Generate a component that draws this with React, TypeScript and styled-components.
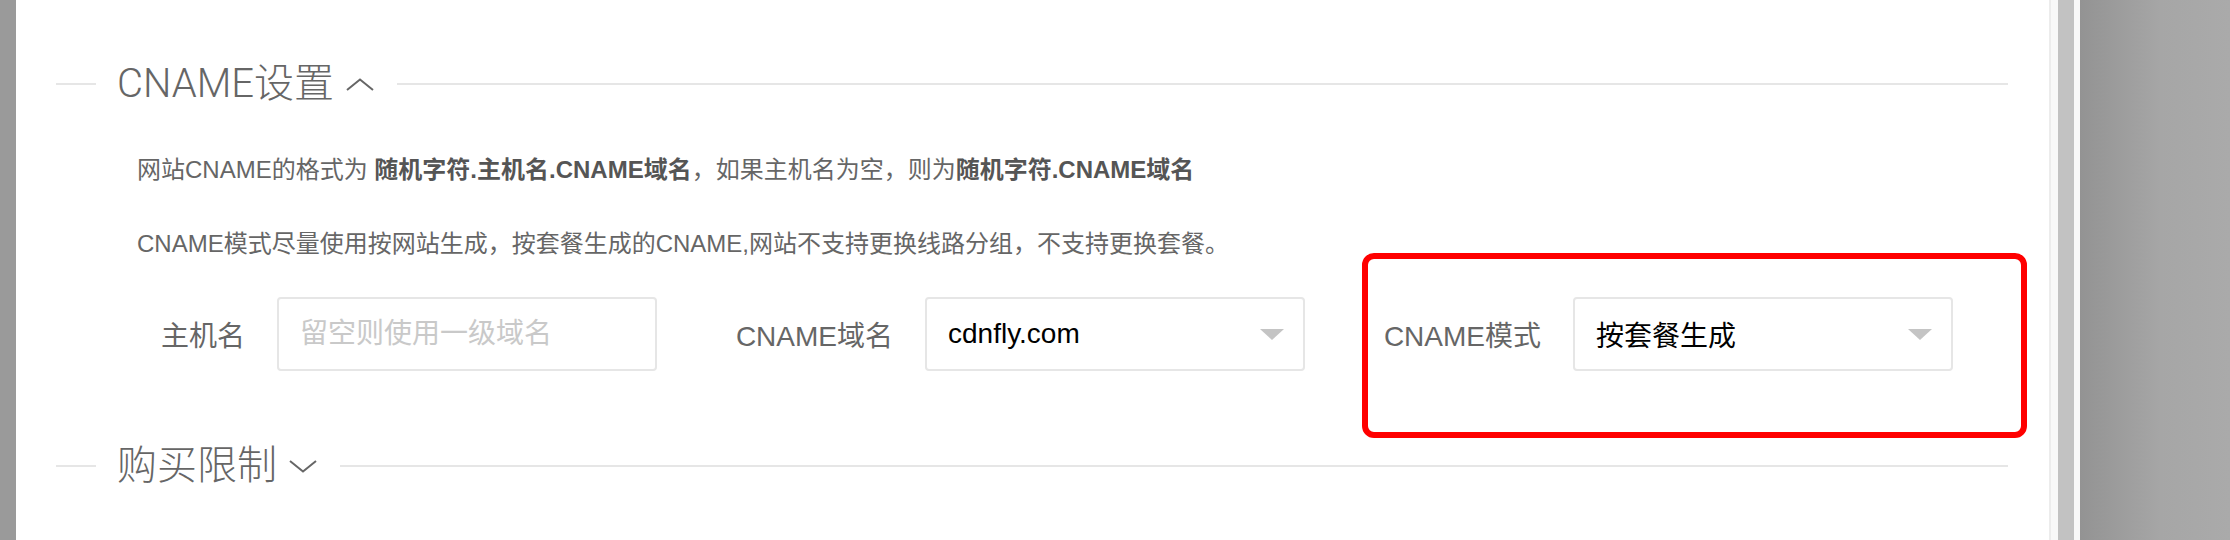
import React from "react";
import styled, { createGlobalStyle } from "styled-components";

const GlobalStyle = createGlobalStyle`
  html, body {
    margin: 0;
    padding: 0;
    height: 100%;
    overflow: hidden;
  }
  body {
    font-family: "Liberation Sans", "Noto Sans CJK SC", sans-serif;
    background: #9a9a9a;
  }
  #root {
    height: 100%;
  }
`;

// Screen: dimmed page, dialog, its scrollbar, dimmed page again
const Screen = styled.div`
  display: flex;
  height: 100vh;
`;

const Backdrop = styled.div<{ $side: "left" | "right" }>`
  flex: ${(p) => (p.$side === "left" ? "0 0 16px" : "1")};
  background: ${(p) =>
    p.$side === "left"
      ? "#9a9a9a"
      : "linear-gradient(to right, #939393 0, #a6a6a6 80px, #aaaaaa 100%)"};
`;

const Dialog = styled.div`
  flex: 0 0 2033px;
  box-sizing: border-box;
  background: #fff;
  padding: 56px 41px 0 40px;
`;

const Scrollbar = styled.div`
  flex: 0 0 31px;
  box-sizing: border-box;
  display: flex;
  background: #f8f8f8;
  border-left: 2px solid #ececec;
  padding: 0 6px 0 7px;
`;

const Thumb = styled.div`
  flex: 1;
  background: #c2c2c2;
`;

// Section header: line - title + chevron - line
const SectionHeader = styled.div<{ $gap?: number }>`
  display: flex;
  align-items: center;
  height: 56px;
  margin-top: ${(p) => p.$gap ?? 0}px;

  &::before {
    content: "";
    flex: 0 0 40px;
    height: 2px;
    background: #e6e6e6;
  }
  &::after {
    content: "";
    flex: 1;
    height: 2px;
    background: #e6e6e6;
  }
`;

const SectionTitle = styled.span`
  display: flex;
  align-items: center;
  gap: 12px;
  padding: 0 23px 0 21px;
  font-family: "Roboto", "Noto Sans CJK SC", sans-serif;
  font-weight: 300;
  font-size: 40px;
  line-height: 56px;
  color: #666;
`;

const Chevron = ({ up }: { up?: boolean }) => (
  <svg width="28" height="13" viewBox="0 0 28 13">
    <polyline
      points={up ? "1,12 14,1.5 27,12" : "1,1 14,11.5 27,1"}
      fill="none"
      stroke="#666"
      strokeWidth="2"
    />
  </svg>
);

// Notes under the title
const Notes = styled.div`
  display: flex;
  flex-direction: column;
  gap: 38px;
  padding: 40px 0 0 81px;
`;

const Note = styled.p`
  margin: 0;
  font-size: 24px;
  line-height: 36px;
  color: #666;

  b {
    color: #555;
    font-weight: bold;
  }
`;

// Form row
const Fields = styled.div`
  display: flex;
  margin-top: 35px;
`;

const Field = styled.div`
  position: relative;
  display: flex;
  align-items: center;
`;

const FieldLabel = styled.label<{ $width: number }>`
  flex: 0 0 ${(p) => p.$width}px;
  margin-right: 32px;
  text-align: right;
  font-size: 28px;
  color: #666;
  white-space: nowrap;
`;

const TextInput = styled.input`
  width: 380px;
  height: 74px;
  box-sizing: border-box;
  border: 2px solid #e6e6e6;
  border-radius: 4px;
  padding: 0 21px;
  font-family: inherit;
  font-size: 28px;
  color: #000;
  outline: none;

  &::placeholder {
    color: #c9c9c9;
  }
`;

const SelectBox = styled.div`
  width: 380px;
  height: 74px;
  box-sizing: border-box;
  display: flex;
  align-items: center;
  justify-content: space-between;
  border: 2px solid #e6e6e6;
  border-radius: 4px;
  padding: 0 19px 0 21px;
  font-size: 28px;
  color: #000;
`;

const Caret = styled.span`
  width: 0;
  height: 0;
  border-left: 12px solid transparent;
  border-right: 12px solid transparent;
  border-top: 11px solid #c4c4c4;
`;

// Red highlight drawn over the screenshot
const Highlight = styled.div`
  position: absolute;
  top: -44px;
  bottom: -67px;
  left: 57px;
  right: -74px;
  border: 6px solid #ff0000;
  border-radius: 12px;
  pointer-events: none;
`;

export default function App() {
  return (
    <>
      <GlobalStyle />
      <Screen>
        <Backdrop $side="left" />
        <Dialog>
          <SectionHeader>
            <SectionTitle>
              CNAME设置
              <Chevron up />
            </SectionTitle>
          </SectionHeader>

          <Notes>
            <Note>
              网站CNAME的格式为 <b>随机字符.主机名.CNAME域名</b>，如果主机名为空，则为
              <b>随机字符.CNAME域名</b>
            </Note>
            <Note>
              CNAME模式尽量使用按网站生成，按套餐生成的CNAME,网站不支持更换线路分组，不支持更换套餐。
            </Note>
          </Notes>

          <Fields>
            <Field>
              <FieldLabel $width={189}>主机名</FieldLabel>
              <TextInput placeholder="留空则使用一级域名" />
            </Field>
            <Field>
              <FieldLabel $width={236}>CNAME域名</FieldLabel>
              <SelectBox>
                cdnfly.com
                <Caret />
              </SelectBox>
            </Field>
            <Field>
              <FieldLabel $width={236}>CNAME模式</FieldLabel>
              <SelectBox>
                按套餐生成
                <Caret />
              </SelectBox>
              <Highlight />
            </Field>
          </Fields>

          <SectionHeader $gap={67}>
            <SectionTitle>
              购买限制
              <Chevron />
            </SectionTitle>
          </SectionHeader>
        </Dialog>
        <Scrollbar>
          <Thumb />
        </Scrollbar>
        <Backdrop $side="right" />
      </Screen>
    </>
  );
}
